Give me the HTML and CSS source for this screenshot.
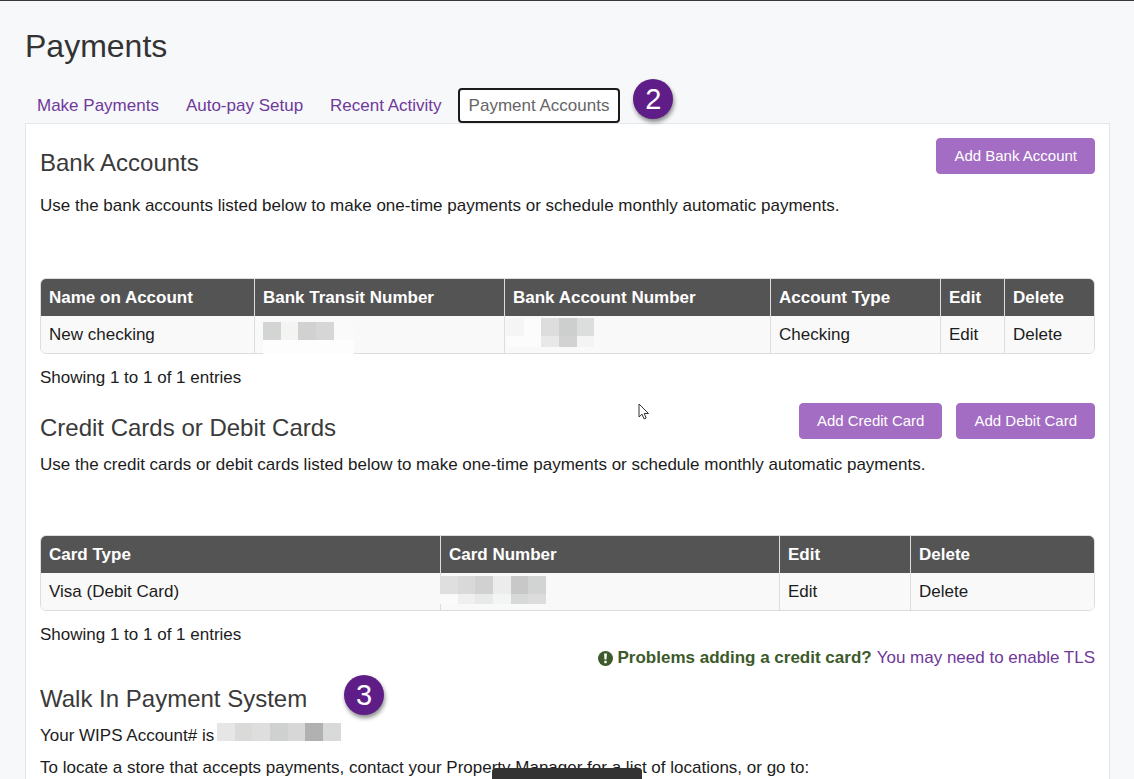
FILE: index.html
```html
<!DOCTYPE html>
<html lang="en">
  <head>
    <meta charset="utf-8">
    <title>Payments</title>
    <meta name="viewport" content="width=device-width, initial-scale=1">
    <link rel="stylesheet" href="styles.css">
  </head>
  <body>
    <main class="page">
      <h1 class="page-title">Payments</h1>

      <nav class="tabs">
        <a class="tab" href="#make">Make Payments</a>
        <a class="tab" href="#autopay">Auto-pay Setup</a>
        <a class="tab" href="#recent">Recent Activity</a>
        <a class="tab tab-active" href="#accounts">Payment Accounts<span class="step step-tab">2</span></a>
      </nav>

      <div class="panel" id="accounts">
        <section class="bank">
          <div class="section-head">
            <h2>Bank Accounts</h2>
            <button class="btn" type="button">Add Bank Account</button>
          </div>
          <p class="intro">Use the bank accounts listed below to make one-time payments or schedule monthly automatic payments.</p>

          <table class="grid">
            <colgroup>
              <col>
              <col class="col-transit">
              <col class="col-number">
              <col class="col-type">
              <col class="col-edit">
              <col class="col-delete">
            </colgroup>
            <thead>
              <tr>
                <th>Name on Account</th>
                <th>Bank Transit Number</th>
                <th>Bank Account Number</th>
                <th>Account Type</th>
                <th>Edit</th>
                <th>Delete</th>
              </tr>
            </thead>
            <tbody>
              <tr>
                <td>New checking</td>
                <td>
                  <svg class="mask mask-transit" width="91" height="32" shape-rendering="crispEdges">
                    <rect width="91" height="32" fill="#fafafa"/>
                    <rect y="18" width="91" height="14" fill="#fdfdfd"/>
                    <rect width="18" height="18" fill="#d3d5d4"/>
                    <rect x="18" width="17" height="18" fill="#f4f4f3"/>
                    <rect x="35" width="18" height="18" fill="#d1d1d1"/>
                    <rect x="53" width="18" height="18" fill="#d6d6d6"/>
                  </svg>
                </td>
                <td>
                  <svg class="mask mask-number" width="88" height="29" shape-rendering="crispEdges">
                    <rect width="88" height="29" fill="#fcfcfc"/>
                    <rect width="18" height="18" fill="#f5f5f5"/>
                    <rect x="35" width="18" height="18" fill="#dcdddc"/>
                    <rect x="53" width="18" height="18" fill="#cdcece"/>
                    <rect x="71" width="17" height="18" fill="#dcdddd"/>
                    <rect x="35" y="18" width="18" height="11" fill="#e8e8e8"/>
                    <rect x="53" y="18" width="18" height="11" fill="#d1d2d1"/>
                    <rect x="71" y="18" width="17" height="11" fill="#f4f4f4"/>
                  </svg>
                </td>
                <td>Checking</td>
                <td><a href="#edit">Edit</a></td>
                <td><a href="#delete">Delete</a></td>
              </tr>
            </tbody>
          </table>
          <p class="entries">Showing 1 to 1 of 1 entries</p>
        </section>

        <section class="cards">
          <div class="section-head">
            <h2>Credit Cards or Debit Cards</h2>
            <div class="actions">
              <button class="btn" type="button">Add Credit Card</button>
              <button class="btn" type="button">Add Debit Card</button>
            </div>
          </div>
          <p class="intro">Use the credit cards or debit cards listed below to make one-time payments or schedule monthly automatic payments.</p>

          <table class="grid">
            <colgroup>
              <col>
              <col class="col-card">
              <col class="col-card-edit">
              <col class="col-card-delete">
            </colgroup>
            <thead>
              <tr>
                <th>Card Type</th>
                <th>Card Number</th>
                <th>Edit</th>
                <th>Delete</th>
              </tr>
            </thead>
            <tbody>
              <tr>
                <td>Visa (Debit Card)</td>
                <td>
                  <svg class="mask mask-card" width="106" height="28" shape-rendering="crispEdges">
                    <rect width="18" height="18" fill="#dfdfdf"/>
                    <rect x="18" width="17" height="18" fill="#d8d9d8"/>
                    <rect x="35" width="18" height="18" fill="#d1d1d1"/>
                    <rect x="53" width="18" height="18" fill="#ececec"/>
                    <rect x="71" width="17" height="18" fill="#c7c8c7"/>
                    <rect x="88" width="18" height="18" fill="#d2d3d3"/>
                    <rect y="18" width="18" height="10" fill="#fafafa"/>
                    <rect x="18" y="18" width="17" height="10" fill="#efefef"/>
                    <rect x="35" y="18" width="18" height="10" fill="#e8eaea"/>
                    <rect x="53" y="18" width="18" height="10" fill="#f3f4f4"/>
                    <rect x="71" y="18" width="17" height="10" fill="#d7d8d8"/>
                    <rect x="88" y="18" width="18" height="10" fill="#dcdcdc"/>
                  </svg>
                </td>
                <td><a href="#edit-card">Edit</a></td>
                <td><a href="#delete-card">Delete</a></td>
              </tr>
            </tbody>
          </table>
          <p class="entries">Showing 1 to 1 of 1 entries</p>
          <p class="help">
            <svg class="help-icon" width="15" height="15" viewBox="0 0 15 15">
              <circle cx="7.5" cy="7.5" r="7.5" fill="#3c5a2a"/>
              <path d="M6.1 2.4h2.8l-.4 6h-2z" fill="#fff"/>
              <rect x="6.3" y="9.8" width="2.4" height="2.4" rx=".4" fill="#fff"/>
            </svg>
            <strong>Problems adding a credit card?</strong>
            <a href="#tls">You may need to enable TLS</a>
          </p>
        </section>

        <section class="walkin">
          <h2>Walk In Payment System<span class="step step-heading">3</span></h2>
          <p class="account">Your WIPS Account# is
            <svg class="mask mask-wips" width="124" height="18" shape-rendering="crispEdges">
              <rect width="18" height="18" fill="#e5e6e5"/>
              <rect x="18" width="17" height="18" fill="#dadbd9"/>
              <rect x="35" width="18" height="18" fill="#dedede"/>
              <rect x="53" width="18" height="18" fill="#cfd1d1"/>
              <rect x="71" width="17" height="18" fill="#d6d7d6"/>
              <rect x="88" width="18" height="18" fill="#b0b1b0"/>
              <rect x="106" width="18" height="18" fill="#d8dad9"/>
            </svg>
          </p>
          <p>To locate a store that accepts payments, contact your Property Manager for a list of locations, or go to:</p>
        </section>
      </div>
    </main>

    <svg class="pointer" width="12" height="18" viewBox="0 0 12 18">
      <path d="M1 1v13l3-2.8 2 4.7 2.2-.9-2-4.5h4.3z" fill="#fff" stroke="#333" stroke-width="1"/>
    </svg>
    <div class="dock"></div>
  </body>
</html>
```
FILE: styles.css
```css
* {
  box-sizing: border-box;
}

body {
  display: flex;
  flex-direction: column;
  min-height: 100vh;
  margin: 0;
  border-top: 1px solid #3a363c;
  background: #f6f8fa;
  color: #1c1c1c;
  font-family: "Liberation Sans", Arial, sans-serif;
  font-size: 17px;
  line-height: 24px;
}

h1, h2, p {
  margin: 0;
}

a {
  color: #70389a;
  text-decoration: none;
}

.page {
  display: flex;
  flex: 1;
  flex-direction: column;
  padding: 25px 24px 0 25px;
}

.page-title {
  color: #333;
  font-size: 32px;
  font-weight: normal;
  line-height: 40px;
}

/* tabs */
.tabs {
  display: flex;
  gap: 5px;
  padding: 22px 0 0 1px;
}

.tab {
  position: relative;
  padding: 4px 9px 3px;
  border: 2px solid transparent;
}

.tab-active {
  background: #fff;
  border-color: #1b1b1b;
  border-radius: 4px;
  color: #666;
}

/* numbered steps */
.step {
  position: absolute;
  width: 40px;
  height: 40px;
  border-radius: 50%;
  background: #5f1d87;
  box-shadow: 1px 3px 4px rgba(0, 0, 0, 0.45);
  color: #fff;
  font-size: 29px;
  line-height: 41px;
  text-align: center;
}

.step-tab {
  top: -11px;
  left: calc(100% + 15px);
}

.step-heading {
  top: -12px;
  left: calc(100% + 37px);
}

.panel {
  flex: 1;
  padding: 14px 14px 0;
  background: #fff;
  border: 1px solid #e4e6ec;
  border-bottom: 0;
}

h2 {
  color: #3a3a3a;
  font-size: 24px;
  font-weight: normal;
  line-height: 24px;
}

.section-head {
  display: flex;
  justify-content: space-between;
  align-items: flex-start;
}

.section-head h2 {
  padding-top: 13px;
}

.actions {
  display: flex;
  gap: 14px;
}

.btn {
  height: 36px;
  padding: 0 17px 2px;
  border: 1px solid #a26dc2;
  border-radius: 4px;
  background: #a26dc2;
  color: #fff;
  font-family: inherit;
  font-size: 15px;
}

.bank .intro {
  padding: 19px 0 60px;
}

.cards .intro {
  padding: 13px 0 58px;
}

/* account tables */
.grid {
  width: 100%;
  table-layout: fixed;
  border: 1px solid #ddd;
  border-radius: 6px;
  border-collapse: separate;
  border-spacing: 0;
}

.grid th,
.grid td {
  position: relative;
  height: 37px;
  padding: 0 8px;
  border-left: 1px solid #ddd;
  text-align: left;
}

.grid th {
  background: #545454;
  color: #fff;
}

.grid td {
  background: #f9f9f9;
}

.grid th:first-child,
.grid td:first-child {
  border-left: 0;
}

.grid th:first-child {
  border-top-left-radius: 5px;
}

.grid th:last-child {
  border-top-right-radius: 5px;
}

.grid td:first-child {
  border-bottom-left-radius: 5px;
}

.grid td:last-child {
  border-bottom-right-radius: 5px;
}

.grid a {
  color: inherit;
}

.col-transit { width: 250px; }
.col-number { width: 266px; }
.col-type { width: 170px; }
.col-edit { width: 64px; }
.col-delete { width: 90px; }
.col-card { width: 339px; }
.col-card-edit { width: 131px; }
.col-card-delete { width: 184px; }

/* blocked out numbers */
.mask {
  position: absolute;
}

.mask-transit {
  top: 6px;
  left: 8px;
}

.mask-number {
  top: 2px;
  left: 1px;
}

.mask-card {
  top: 3px;
  left: -1px;
}

.mask-wips {
  top: 12px;
  left: 177px;
}

.entries {
  padding-top: 12px;
}

.cards {
  padding-top: 13px;
}

.help {
  display: flex;
  justify-content: flex-end;
  align-items: center;
  gap: 5px;
  color: #3c5a2a;
  line-height: 22px;
}

.walkin {
  padding-top: 18px;
}

.walkin h2 {
  position: relative;
  width: max-content;
}

.account {
  position: relative;
  padding: 13px 0 8px;
}

.pointer {
  position: absolute;
  top: 403px;
  left: 638px;
}

.dock {
  position: fixed;
  bottom: 0;
  left: 50%;
  width: 150px;
  height: 11px;
  margin-left: -75px;
  border-radius: 4px 4px 0 0;
  background: #333;
}
```
